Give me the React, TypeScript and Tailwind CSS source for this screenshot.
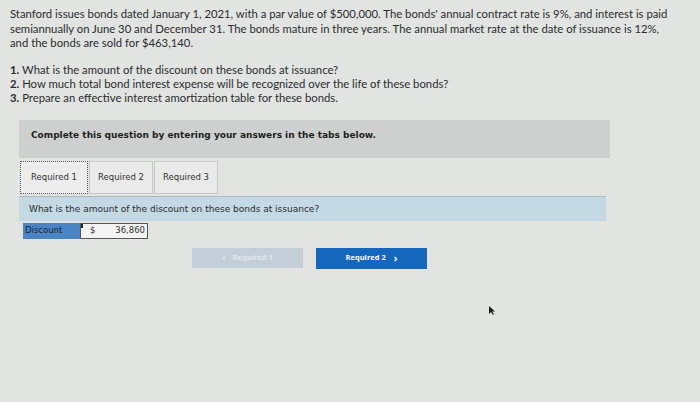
const tabs = ['Required 1', 'Required 2', 'Required 3'];

export default function App() {
  return (
    <div className="w-[700px] h-[402px] overflow-hidden bg-[#e2e4e2] text-[#2a2c2e]">
      <div className="pl-[10px] pt-[7px] font-['Lato',sans-serif] text-[11.3px] leading-[14.5px] whitespace-nowrap">
        <p>
          Stanford issues bonds dated January 1, 2021, with a par value of $500,000. The bonds' annual contract rate is 9%, and interest is paid
          <br />
          semiannually on June 30 and December 31. The bonds mature in three years. The annual market rate at the date of issuance is 12%,
          <br />
          and the bonds are sold for $463,140.
        </p>
        <ol className="mt-[12px] leading-[14px]">
          <li><b>1.</b> What is the amount of the discount on these bonds at issuance?</li>
          <li><b>2.</b> How much total bond interest expense will be recognized over the life of these bonds?</li>
          <li><b>3.</b> Prepare an effective interest amortization table for these bonds.</li>
        </ol>
      </div>

      <div className="ml-[19px] w-[591px] font-['DejaVu_Sans',sans-serif]">
        <div className="mt-[15px] h-[38px] bg-[#cdd0ce] pl-[12px] pt-[9px] text-[9px] font-bold text-[#1e1f20]">
          Complete this question by entering your answers in the tabs below.
        </div>

        <div className="mt-[3px] flex h-[33px] items-stretch gap-[1px] pl-[1px]">
          {tabs.map((t, i) => (
            <div
              key={t}
              className={
                i === 0
                  ? 'flex w-[68px] items-center justify-center border border-dotted border-[#555] bg-[#ecedec] text-[8.5px] text-[#333]'
                  : 'flex w-[64px] items-center justify-center border border-[#c8cac8] bg-[#e9eae9] text-[8.5px] text-[#333]'
              }
            >
              {t}
            </div>
          ))}
        </div>

        <div className="mt-[2px] mr-[4px] h-[25px] border-t border-[#aab9c2] bg-[#c3d9e4] pl-[10px] pt-[6px] text-[9px] text-[#2b2d30]">
          What is the amount of the discount on these bonds at issuance?
        </div>

        <div className="mt-[2px] ml-[4px] flex h-[16px] text-[8.5px]">
          <div className="flex w-[57px] items-center bg-[#4a86c6] pl-[2px] text-[#1b2633]">Discount</div>
          <div className="relative flex w-[68px] items-center justify-between border border-[#555] bg-[#f2f3f2] pl-[9px] pr-[2px] text-[#333]">
            <span className="absolute left-0 top-0 h-[4px] w-[2px] bg-[#222]" />
            <span>$</span>
            <span>36,860</span>
          </div>
        </div>
      </div>

      <div className="mt-[9px] flex gap-[13px] pl-[192px] font-['Open_Sans',sans-serif] text-[7.5px] font-bold">
        <div className="flex h-[20px] w-[111px] items-center justify-center gap-[7px] bg-[#c3ced8] text-[#e2e8ee]">
          <span className="text-[9px]">‹</span>
          <span>Required 1</span>
        </div>
        <div className="flex h-[21px] w-[111px] items-center justify-center gap-[8px] bg-[#1566bd] text-white">
          <span>Required 2</span>
          <span className="text-[10px]">›</span>
        </div>
      </div>

      <div className="ml-[489px] mt-[37px] h-[9px] w-[6px]">
        <svg width="6" height="9" viewBox="0 0 6 9">
          <path d="M0 0 L0 8 L2 6 L4 9 L5 8 L3 5.5 L6 5.5 Z" fill="#1b1b1b" />
        </svg>
      </div>
    </div>
  );
}
